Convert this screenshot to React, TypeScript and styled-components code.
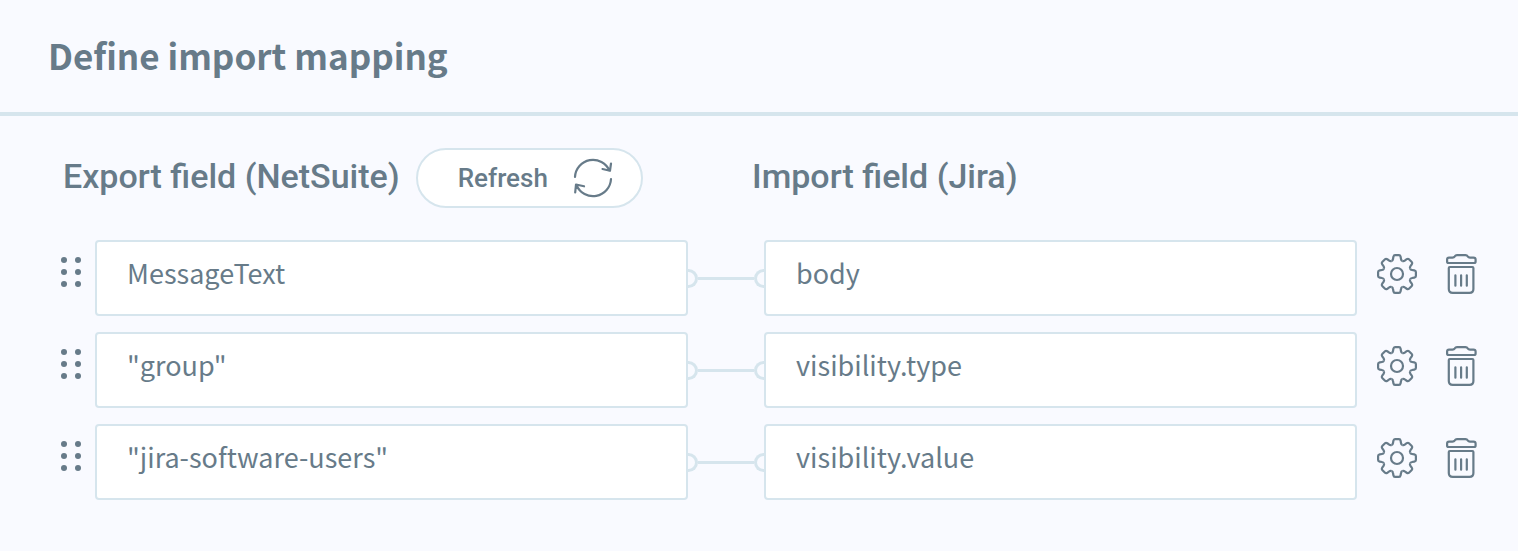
import React from "react";
import styled, { createGlobalStyle } from "styled-components";

const ink = "#677b89";
const line = "#d6e5ed";

const GlobalStyle = createGlobalStyle`
  *, *::before, *::after { box-sizing: border-box; }
  body { margin: 0; background: #f9faff; color: ${ink}; }
`;

const Page = styled.main`
  min-height: 100vh;
  padding-bottom: 51px;
  font-family: "Noto Sans CJK SC", "Noto Sans", sans-serif;
`;

const Header = styled.header`
  padding: 28px 48px 30px;
  border-bottom: 4px solid ${line};
`;

const Title = styled.h1`
  margin: 0;
  font-size: 35px;
  line-height: 54px;
  font-weight: 700;
`;

const ColumnHeads = styled.div`
  display: grid;
  grid-template-columns: 1fr 1fr;
  padding: 32px 77px 32px 63px;
`;

const Column = styled.div`
  display: flex;
  align-items: center;
  gap: 16px;
`;

const ColumnTitle = styled.h2`
  margin: 0;
  padding-bottom: 4px;
  font-family: Roboto, sans-serif;
  font-size: 34px;
  line-height: 56px;
  font-weight: 500;
  white-space: nowrap;
`;

const RefreshButton = styled.button`
  display: flex;
  align-items: center;
  justify-content: space-between;
  width: 227px;
  height: 60px;
  padding: 0 28px 0 40px;
  border: 2px solid ${line};
  border-radius: 30px;
  background: #fff;
  color: ${ink};
  font-family: Roboto, sans-serif;
  font-size: 26px;
  font-weight: 500;
  cursor: pointer;
`;

const Mappings = styled.ul`
  display: grid;
  gap: 16px;
  margin: 0;
  padding: 0 41px 0 61px;
  list-style: none;
`;

const MappingRow = styled.li`
  display: flex;
  align-items: center;
`;

const IconButton = styled.button`
  display: flex;
  flex: none;
  padding: 0;
  border: 0;
  background: none;
  color: ${ink};
  cursor: pointer;
`;

const GripButton = styled(IconButton)`
  margin: 0 14px 12px 0;
  cursor: grab;
`;

const Actions = styled.div`
  display: flex;
  flex: none;
  gap: 29px;
  margin: 0 0 8px 20px;
`;

const Field = styled.input`
  flex: 1 1 0;
  min-width: 0;
  height: 76px;
  padding: 0 30px 12px;
  border: 2px solid ${line};
  border-radius: 4px;
  background: #fff;
  color: ${ink};
  font-family: inherit;
  font-size: 27px;
`;

const Connector = styled.div`
  display: flex;
  flex: none;
  align-items: center;
  width: 76px;
`;

const Wire = styled.span`
  flex: 1;
  height: 3px;
  background: ${line};
`;

const Port = styled.span<{ $side: "left" | "right" }>`
  width: 10px;
  height: 19px;
  border: 3px solid ${line};
  ${(p) =>
    p.$side === "left"
      ? "border-left: 0; border-radius: 0 10px 10px 0;"
      : "border-right: 0; border-radius: 10px 0 0 10px;"}
`;

const RefreshIcon = () => (
  <svg width="40" height="40" viewBox="0 0 40 40" fill="none" stroke="currentColor" strokeWidth="2.2" strokeLinecap="round" strokeLinejoin="round" aria-hidden="true">
    <path d="M2 19A18 18 0 0 1 36.500 12.700M29.500 11L37 12.700L38 5.500" />
    <path d="M38 21A18 18 0 0 1 3.500 27.300M11 28.300L3 26.500L2.200 34.500" />
  </svg>
);

const GripIcon = () => (
  <svg width="20" height="30" viewBox="0 0 20 30" fill="currentColor" aria-hidden="true">
    {[3, 15, 27].map((y) => (
      <React.Fragment key={y}>
        <circle cx="3" cy={y} r="3" />
        <circle cx="17" cy={y} r="3" />
      </React.Fragment>
    ))}
  </svg>
);

const GearIcon = () => (
  <svg width="40" height="40" viewBox="-20 -20 40 40" fill="none" stroke="currentColor" strokeWidth="2.2" strokeLinejoin="round" aria-hidden="true">
    <circle r="6" />
    {[0, 45, 90, 135, 180, 225, 270, 315].map((angle) => (
      <path
        key={angle}
        transform={`rotate(${angle})`}
        d="M-5.430 -13.100Q-4.200 -13.600 -4 -15L-3.600 -17.300Q-3.300 -18.900 -2 -18.900H2Q3.300 -18.900 3.600 -17.300L4 -15Q4.200 -13.600 5.430 -13.100"
      />
    ))}
  </svg>
);

const TrashIcon = () => (
  <svg width="31" height="40" viewBox="0 0 31 40" fill="none" stroke="currentColor" strokeWidth="2.200" strokeLinecap="round" strokeLinejoin="round" aria-hidden="true">
    <path d="M3 3.600H6.500Q8 3.600 8.800 2.300Q9.500 1.100 11 1.100H19.500Q21 1.100 21.700 2.300Q22.500 3.600 24 3.600H27.500Q29.600 3.600 29.600 5.500V7.500Q29.600 9 28 9H2.600Q1.100 9 1.100 7.500V5.500Q1.100 3.600 3 3.600Z" />
    <path d="M3.800 13H26.400Q27.400 13 27.400 14V35Q27.400 38.900 23.500 38.900H6.700Q2.800 38.900 2.800 35V14Q2.800 13 3.800 13Z" />
    <path d="M9.400 21.300V31.700M15.100 21.300V31.700M20.800 21.300V31.700" />
  </svg>
);

const mappings = [
  { exportField: "MessageText", importField: "body" },
  { exportField: '"group"', importField: "visibility.type" },
  { exportField: '"jira-software-users"', importField: "visibility.value" },
];

export default function App() {
  return (
    <Page>
      <GlobalStyle />
      <Header>
        <Title>Define import mapping</Title>
      </Header>
      <ColumnHeads>
        <Column>
          <ColumnTitle>Export field (NetSuite)</ColumnTitle>
          <RefreshButton type="button">
            Refresh
            <RefreshIcon />
          </RefreshButton>
        </Column>
        <Column>
          <ColumnTitle>Import field (Jira)</ColumnTitle>
        </Column>
      </ColumnHeads>
      <Mappings>
        {mappings.map((m) => (
          <MappingRow key={m.importField}>
            <GripButton type="button" aria-label="Reorder">
              <GripIcon />
            </GripButton>
            <Field aria-label="Export field" defaultValue={m.exportField} />
            <Connector>
              <Port $side="left" />
              <Wire />
              <Port $side="right" />
            </Connector>
            <Field aria-label="Import field" defaultValue={m.importField} />
            <Actions>
              <IconButton type="button" aria-label="Settings">
                <GearIcon />
              </IconButton>
              <IconButton type="button" aria-label="Delete">
                <TrashIcon />
              </IconButton>
            </Actions>
          </MappingRow>
        ))}
      </Mappings>
    </Page>
  );
}
